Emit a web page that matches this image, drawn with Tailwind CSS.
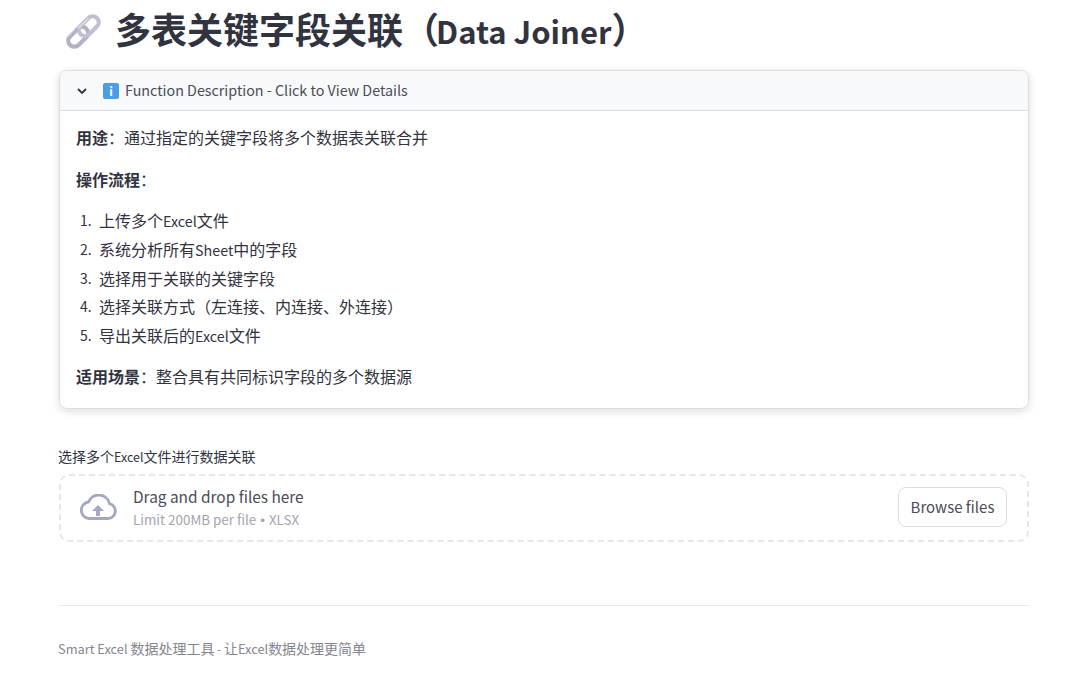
<!DOCTYPE html>
<html lang="zh"><head><meta charset="utf-8"><script src="https://cdn.jsdelivr.net/npm/@tailwindcss/browser@4"></script></head>
<body class="bg-white font-['Noto_Sans_CJK_SC','Noto_Sans',sans-serif] text-[#31333f] h-[693px] overflow-hidden">
<main class="ml-[59px] w-[970px] flex flex-col">
  <h1 class="h-[70px] flex items-center gap-[13px] pl-[6px] text-[36px] font-bold leading-none text-[#31333f] pb-[14px]">
    <svg class="w-[37px] h-[37px] mt-[7px] shrink-0" viewBox="0 0 37 37" fill="none">
      <g transform="rotate(-45 18.500 18.500)">
        <rect x="-0.500" y="12.500" width="23" height="12" rx="6" stroke="#b3b1c4" stroke-width="4.200"/>
        <rect x="14.500" y="12.500" width="23" height="12" rx="6" stroke="#c2c0d0" stroke-width="4.200"/>
        <path d="M18 12.500 h13" stroke="#e4e3ec" stroke-width="1.200" stroke-linecap="round"/>
        <path d="M3 10.800 h10" stroke="#dddce6" stroke-width="1.200" stroke-linecap="round"/>
      </g>
    </svg>
    <span>多表关键字段关联（<span class="text-[31px] -ml-[3px]">Data Joiner</span>）</span>
  </h1>
  <section class="h-[339px] rounded-[8px] border border-[#dcdde1] shadow-[0_2px_8px_rgba(0,0,0,0.14)] overflow-hidden flex flex-col">
    <div class="h-[40px] shrink-0 bg-[#f8f9fb] border-b border-[#dcdde1] flex items-center pl-[16px] pb-[2px] text-[14.300px] text-[#4a4c58]">
      <svg class="w-[12px] h-[12px] mr-[15px] mt-[2px]" viewBox="0 0 12 12" fill="none"><path d="M2 4l4 4 4-4" stroke="#31333f" stroke-width="1.800"/></svg>
      <span class="w-[16px] h-[16px] mr-[6px] mt-[2px] rounded-[2px] bg-[#4d9ce6] text-white text-[12px] font-bold leading-[16px] text-center">i</span>
      <span>Function Description - Click to View Details</span>
    </div>
    <div class="pl-[16px] pr-[17px] pt-[16px] text-[16px] leading-[20px] text-[#31333f]">
      <p><b class="font-bold">用途</b>：通过指定的关键字段将多个数据表关联合并</p>
      <p class="mt-[21.500px]"><b class="font-bold">操作流程</b>：</p>
      <ol class="mt-[21.500px] pl-[4px] flex flex-col gap-[8.800px]">
        <li class="flex h-[20px]"><span class="w-[19px] text-[14px]">1.</span><span>上传多个<span class="text-[14.300px]">Excel</span>文件</span></li>
        <li class="flex h-[20px]"><span class="w-[19px] text-[14px]">2.</span><span>系统分析所有<span class="text-[14.300px]">Sheet</span>中的字段</span></li>
        <li class="flex h-[20px]"><span class="w-[19px] text-[14px]">3.</span><span>选择用于关联的关键字段</span></li>
        <li class="flex h-[20px]"><span class="w-[19px] text-[14px]">4.</span><span>选择关联方式（左连接、内连接、外连接）</span></li>
        <li class="flex h-[20px]"><span class="w-[19px] text-[14px]">5.</span><span>导出关联后的<span class="text-[14.300px]">Excel</span>文件</span></li>
      </ol>
      <p class="mt-[21px]"><b class="font-bold">适用场景</b>：整合具有共同标识字段的多个数据源</p>
    </div>
  </section>
  <label class="mt-[37px] h-[20px] -ml-px text-[14px] leading-[20px] text-[#31333f]">选择多个<span class="text-[12.500px]">Excel</span>文件进行数据关联</label>
  <div class="mt-[8px] h-[68px] rounded-[10px] border-2 border-dashed border-[#e6e7ea] flex items-center pl-[19px] pr-[20px]">
    <svg class="w-[38px] h-[28px] mr-[16px] -ml-px shrink-0" viewBox="0 0 38 28" fill="none">
      <path d="M10 24.500h19a7.500 7.500 0 0 0 1.500-14.800A11 11 0 0 0 9.500 8 8.300 8.300 0 0 0 10 24.500z" stroke="#a3a8bf" stroke-width="2.800"/>
      <path d="M19 11l6 6h-4v5h-4v-5h-4z" fill="#a3a8bf"/>
    </svg>
    <div class="flex-1 flex flex-col">
      <div class="text-[15.400px] leading-[22px] text-[#4a4c58]">Drag and drop files here</div>
      <div class="text-[13.400px] leading-[20px] mt-[2px] text-[#a3a5ad]">Limit 200MB per file <span class="font-['Liberation_Sans'] mx-[1px]">•</span> XLSX</div>
    </div>
    <button class="w-[109px] h-[40px] -mt-[2px] pt-[1px] rounded-[8px] border border-[#dcdde1] text-[15px] text-[#4a4c58]">Browse files</button>
  </div>
  <hr class="mt-[63px] border-[#e6e7ea]">
  <footer class="mt-[32px] -ml-px text-[14px] leading-[20px] text-[#84868f]"><span class="text-[12.800px]">Smart Excel </span>数据处理工具<span class="text-[12px]"> - </span>让<span class="text-[12.800px]">Excel</span>数据处理更简单</footer>
</main>
</body></html>
